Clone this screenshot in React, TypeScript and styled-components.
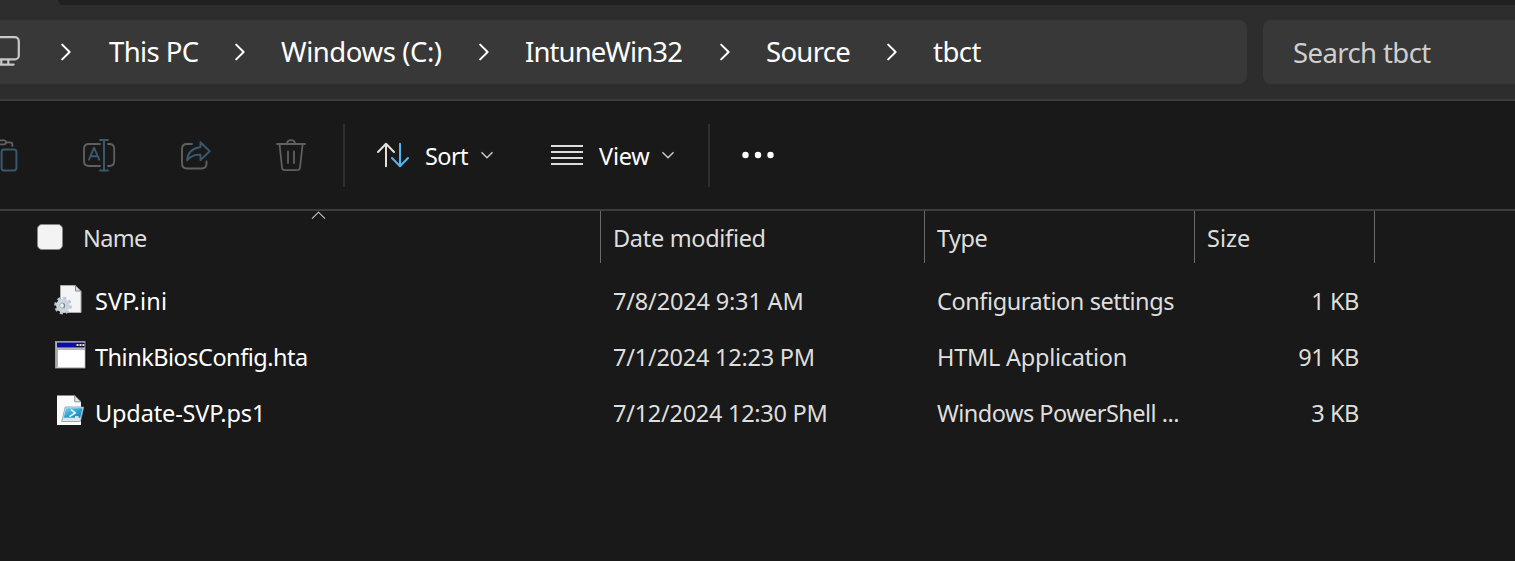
import React from "react";
import styled, { createGlobalStyle } from "styled-components";

const GlobalStyle = createGlobalStyle`
  * { box-sizing: border-box; }
  body {
    margin: 0;
    background: #191919;
    font-family: "Noto Sans", "Open Sans", sans-serif;
    overflow: hidden;
  }
  svg { display: block; flex: none; }
`;

const Window = styled.div`
  display: flex;
  flex-direction: column;
  width: 1515px;
  height: 561px;
  background: #191919;
  overflow: hidden;
`;

const TitleStrip = styled.div`
  height: 5px;
  padding-left: 58px;
  background: #2d2d2d;
`;

const TitleFill = styled.div`
  height: 5px;
  background: #202020;
  border-bottom-left-radius: 7px;
`;

const NavBar = styled.header`
  display: flex;
  gap: 16px;
  height: 96px;
  padding-top: 15px;
  background: #2d2d2d;
  border-bottom: 2px solid #3b3b3b;
`;

const AddressBar = styled.nav`
  display: flex;
  align-items: center;
  width: 1247px;
  height: 64px;
  background: #383838;
  border-radius: 0 8px 8px 0;
`;

const SearchBox = styled.div`
  display: flex;
  align-items: center;
  flex: 1;
  height: 64px;
  padding: 2px 0 0 30px;
  background: #383838;
  border-radius: 8px 0 0 8px;
`;

const Label = styled.span<{ $track?: number }>`
  letter-spacing: ${(p) => p.$track ?? 0}px;
  white-space: nowrap;
`;

const NavText = styled(Label)`
  font-size: 27.5px;
  line-height: 38px;
  color: #ffffff;
`;

const SearchText = styled(NavText)`
  color: #cfcfcf;
`;

const Crumb = styled.div<{ $width: number; $pad: number }>`
  width: ${(p) => p.$width}px;
  padding-left: ${(p) => p.$pad}px;
  flex: none;
`;

const MonitorSlot = styled.div`
  width: 60.5px;
  flex: none;
`;

const Toolbar = styled.div`
  display: flex;
  align-items: center;
  height: 110px;
  border-bottom: 2px solid #3d3d3d;
`;

const IconButton = styled.div<{ $width: number }>`
  width: ${(p) => p.$width}px;
  flex: none;
`;

const Divider = styled.div`
  width: 2px;
  height: 63px;
  background: #2f2f2f;
  flex: none;
`;

const MenuButton = styled.div<{ $width: number; $pad: number }>`
  display: flex;
  align-items: center;
  width: ${(p) => p.$width}px;
  padding-left: ${(p) => p.$pad}px;
  flex: none;
`;

const MenuText = styled(Label)<{ $width: number }>`
  width: ${(p) => p.$width}px;
  margin: 2px 0 0 16px;
  font-size: 23.5px;
  line-height: 32px;
  color: #ffffff;
`;

const columns = "600px 324px 270px 180px 1fr";

const HeaderRow = styled.div`
  display: grid;
  grid-template-columns: ${columns};
  height: 52px;
`;

const HeaderCell = styled.div`
  position: relative;
  padding: 11px 0 0 12px;
  border-left: 1px solid #6a6a6a;
  font-size: 23.5px;
  line-height: 32px;
  color: #dedede;
`;

const NameHeader = styled(HeaderCell)`
  display: flex;
  padding-left: 37px;
  border-left: 0;
`;

const SortMark = styled.div`
  position: absolute;
  left: 311px;
  top: 0;
`;

const CheckBox = styled.div`
  width: 26px;
  height: 26px;
  margin: 2px 20px 0 0;
  background: #f3f3f3;
  border: 1.5px solid #868686;
  border-radius: 5px;
`;

const FileList = styled.div`
  padding-top: 10px;
`;

const FileRow = styled.div`
  display: grid;
  grid-template-columns: ${columns};
  align-items: center;
  height: 56px;
`;

const Cell = styled.div`
  padding-left: 13px;
  font-size: 23.5px;
  line-height: 32px;
  color: #dedede;
`;

const NameCell = styled(Cell)`
  display: flex;
  align-items: center;
  gap: 7px;
  padding-left: 54px;
  color: #ffffff;
`;

const SizeCell = styled(Cell)`
  padding-right: 15px;
  text-align: right;
`;

const grey = "#606060";
const blue = "#38596d";

const MonitorIcon = () => (
  <svg width="24" height="34" viewBox="0 35 24 34" fill="none" stroke="#c8c8c8" strokeWidth="2.2">
    <rect x="-12" y="37.2" width="30.8" height="22.2" rx="4" />
    <path d="M1.3 60v4M8.3 60v4" />
    <path d="M-4 64.6H13.6" strokeLinecap="round" />
  </svg>
);

const CrumbArrow = () => (
  <svg width="10" height="18" viewBox="0 0 10 18" fill="none" stroke="#fff" strokeWidth="2" strokeLinecap="round" strokeLinejoin="round">
    <path d="M1.2 1.6 8.6 9 1.2 16.4" />
  </svg>
);

const DropArrow = () => (
  <svg width="12" height="8" viewBox="0 0 12 8" fill="none" stroke="#c4c4c4" strokeWidth="1.6" strokeLinecap="round" strokeLinejoin="round">
    <path d="M1 1.7 6 6.7 11 1.7" />
  </svg>
);

const PasteIcon = () => (
  <svg width="20" height="36" viewBox="0 137 20 36" fill="none" strokeWidth="1.8">
    <g stroke={grey}>
      <rect x="-8" y="140.3" width="14" height="4" rx="2" />
      <path d="M6 142.3h4q2.4 0 2.4 2.4v2" />
    </g>
    <rect x="1.6" y="149.6" width="14.8" height="20.8" rx="2.4" stroke={blue} strokeWidth="2" />
  </svg>
);

const RenameIcon = () => (
  <svg width="34" height="36" viewBox="82 137 34 36" fill="none" strokeWidth="1.8" strokeLinecap="round">
    <path d="M100 144h-11q-5 0-5 5v12q0 5 5 5H100M108 144h1.200q5 0 5 5v12q0 5-5 5H108" stroke={grey} />
    <path d="M104 140v30.500M100 140h8M100 170.500h8" stroke={blue} strokeWidth="2" />
    <path d="M89 159.700 94 147.700 99.200 159.700M91 156.200h6.500" stroke={blue} strokeWidth="1.900" strokeLinejoin="round" />
  </svg>
);

const ShareIcon = () => (
  <svg width="34" height="36" viewBox="180 137 34 36" fill="none" strokeWidth="1.9" strokeLinecap="round" strokeLinejoin="round">
    <path d="M192 144h-5q-5 0-5 5v14.500q0 5 5 5h14.500q5 0 5-5v-2" stroke={grey} />
    <path d="M200.500 142.300 209.700 151.200 200.500 160v-5.200q-8.500-.5-13.500 5.600 1-11.600 13.500-13.400z" stroke={blue} />
  </svg>
);

const TrashIcon = () => (
  <svg width="34" height="36" viewBox="274 137 34 36" fill="none" stroke={grey} strokeWidth="1.8" strokeLinecap="round" strokeLinejoin="round">
    <path d="M277 144h28M287 143.500q.4-3.400 4-3.400t4 3.400" />
    <path d="M279.600 144.500 282 167.500q.3 2.700 3 2.700h12q2.700 0 3-2.700l2.600-23M288 151.500v11.500M294 151.500v11.500" />
  </svg>
);

const SortIcon = () => (
  <svg width="32" height="26" viewBox="377 142 32 26" fill="none" strokeWidth="2" strokeLinecap="round" strokeLinejoin="round">
    <path d="M386 166.300V144M378 152l8-8.200 8 8.200" stroke="#e4dede" />
    <path d="M400 143.700v22.300M392 158l8 8.200 8-8.200" stroke="#54b6ee" />
  </svg>
);

const ViewIcon = () => (
  <svg width="32" height="26" viewBox="0 0 32 26" fill="#dcdcdc">
    <rect y="3" width="32" height="2" />
    <rect y="9" width="32" height="2" />
    <rect y="15" width="32" height="2" />
    <rect y="21" width="32" height="2" />
  </svg>
);

const MoreIcon = () => (
  <svg width="32" height="8" viewBox="0 0 32 8" fill="#fff">
    <circle cx="3.5" cy="4" r="3.2" />
    <circle cx="16" cy="4" r="3.2" />
    <circle cx="28.500" cy="4" r="3.2" />
  </svg>
);

const CaretUp = () => (
  <svg width="15" height="9" viewBox="0 0 15 9" fill="none" stroke="#c8c8c8" strokeWidth="1.1">
    <path d="M1 7.700 7.500 1.200 14 7.700" />
  </svg>
);

const IniIcon = () => (
  <svg width="34" height="34" viewBox="54 284 34 34">
    <path d="M60.500 285.500h15l5.500 5.500v21.500H60.500z" fill="#f3f4f6" stroke="#a9adb1" />
    <path d="M75.500 285.500v5.500H81z" fill="#d7d9db" stroke="#85898c" />
    <circle cx="63" cy="305.600" r="7.300" fill="none" stroke="#b9c4cc" strokeWidth="3.200" strokeDasharray="2.900 2.833" />
    <circle cx="63" cy="305.600" r="4.900" fill="#d9e0e6" stroke="#ccd5db" strokeWidth="4" />
    <circle cx="62.200" cy="305.600" r="2.500" fill="#f0f2f4" stroke="#9aa6b0" strokeWidth=".9" />
    <path d="M63.300 303.200q2.400 2 .3 4.900" stroke="#7b8893" strokeWidth="1.400" fill="none" />
  </svg>
);

const HtaIcon = () => (
  <svg width="34" height="34" viewBox="54 340 34 34">
    <rect x="55" y="341" width="31.500" height="28.500" fill="#0a0a0a" />
    <rect x="55" y="341" width="30.500" height="27.500" fill="#9b9b9b" />
    <rect x="56.500" y="342" width="28.500" height="26" fill="#c9c9c9" />
    <rect x="57" y="342.500" width="27.500" height="5" fill="#0a0aa5" />
    <rect x="75.500" y="343" width="9" height="4" fill="#15152a" />
    <path d="M76.500 345h2M79.500 345h2M82.400 345h2" stroke="#e2e2e2" strokeWidth="2" />
    <rect x="57.500" y="349.500" width="27" height="17.500" fill="#fff" />
    <path d="M57.200 367V349.200H85" fill="none" stroke="#858585" strokeWidth=".8" />
  </svg>
);

const PsIcon = () => (
  <svg width="34" height="34" viewBox="54 396 34 34" overflow="visible">
    <defs>
      <linearGradient id="psBlue" x1="0" y1="0" x2="1" y2="1">
        <stop offset="0" stopColor="#7fd0ee" />
        <stop offset=".5" stopColor="#2ba3d3" />
        <stop offset="1" stopColor="#1682b8" />
      </linearGradient>
    </defs>
    <path d="M57 395.500h17.500l6.500 6.500v23H57z" fill="#fbfbfb" />
    <path d="M74.700 395.500v6.300H81z" fill="#e3e5e7" stroke="#84888c" strokeWidth=".9" />
    <path d="M65.200 407h18.600l-3.400 14.500H61.800z" fill="#d5e8f1" stroke="#7b9aaa" strokeWidth=".8" />
    <path d="M66 408.200h16.600l-2.300 9.600H63.700z" fill="url(#psBlue)" />
    <path d="M71 409.700l4.200 3.300-5.800 3.600M75 417h3.500" fill="none" stroke="#fff" strokeWidth="1.500" />
  </svg>
);

const crumbs = [
  { text: "This PC", width: 164, pad: 38.5, track: -0.6 },
  { text: "Windows (C:)", width: 234, pad: 36.5, track: -0.43 },
  { text: "IntuneWin32", width: 231, pad: 36.5, track: -0.9 },
  { text: "Source", width: 157, pad: 36.5, track: -0.7 },
  { text: "tbct", width: 120, pad: 36.5, track: -0.5 },
];

const files = [
  { Icon: IniIcon, name: "SVP.ini", nt: 0.15, date: "7/8/2024 9:31 AM", dt: -0.17, type: "Configuration settings", tt: -0.42, size: "1 KB" },
  { Icon: HtaIcon, name: "ThinkBiosConfig.hta", nt: -0.5, date: "7/1/2024 12:23 PM", dt: -0.24, type: "HTML Application", tt: -0.25, size: "91 KB" },
  { Icon: PsIcon, name: "Update-SVP.ps1", nt: -0.14, date: "7/12/2024 12:30 PM", dt: -0.27, type: "Windows PowerShell ...", tt: -0.53, size: "3 KB" },
];

export default function App() {
  return (
    <Window>
      <GlobalStyle />
      <TitleStrip>
        <TitleFill />
      </TitleStrip>
      <NavBar>
        <AddressBar>
          <MonitorSlot>
            <MonitorIcon />
          </MonitorSlot>
          {crumbs.map((c) => (
            <React.Fragment key={c.text}>
              <CrumbArrow />
              <Crumb $width={c.width} $pad={c.pad}>
                <NavText $track={c.track}>{c.text}</NavText>
              </Crumb>
            </React.Fragment>
          ))}
        </AddressBar>
        <SearchBox>
          <SearchText $track={-0.6}>Search tbct</SearchText>
        </SearchBox>
      </NavBar>
      <Toolbar>
        <IconButton $width={82}>
          <PasteIcon />
        </IconButton>
        <IconButton $width={98}>
          <RenameIcon />
        </IconButton>
        <IconButton $width={94}>
          <ShareIcon />
        </IconButton>
        <IconButton $width={69}>
          <TrashIcon />
        </IconButton>
        <Divider />
        <MenuButton $width={206} $pad={32}>
          <SortIcon />
          <MenuText $width={56} $track={-0.6}>Sort</MenuText>
          <DropArrow />
        </MenuButton>
        <MenuButton $width={157} $pad={0}>
          <ViewIcon />
          <MenuText $width={63} $track={-0.2}>View</MenuText>
          <DropArrow />
        </MenuButton>
        <Divider />
        <MenuButton $width={64} $pad={32}>
          <MoreIcon />
        </MenuButton>
      </Toolbar>
      <HeaderRow>
        <NameHeader>
          <SortMark>
            <CaretUp />
          </SortMark>
          <CheckBox />
          <Label $track={-0.7}>Name</Label>
        </NameHeader>
        <HeaderCell>
          <Label $track={-0.31}>Date modified</Label>
        </HeaderCell>
        <HeaderCell>
          <Label $track={-0.5}>Type</Label>
        </HeaderCell>
        <HeaderCell>
          <Label>Size</Label>
        </HeaderCell>
        <HeaderCell />
      </HeaderRow>
      <FileList>
        {files.map(({ Icon, ...f }) => (
          <FileRow key={f.name}>
            <NameCell>
              <Icon />
              <Label $track={f.nt}>{f.name}</Label>
            </NameCell>
            <Cell>
              <Label $track={f.dt}>{f.date}</Label>
            </Cell>
            <Cell>
              <Label $track={f.tt}>{f.type}</Label>
            </Cell>
            <SizeCell>
              <Label $track={-0.4}>{f.size}</Label>
            </SizeCell>
          </FileRow>
        ))}
      </FileList>
    </Window>
  );
}
